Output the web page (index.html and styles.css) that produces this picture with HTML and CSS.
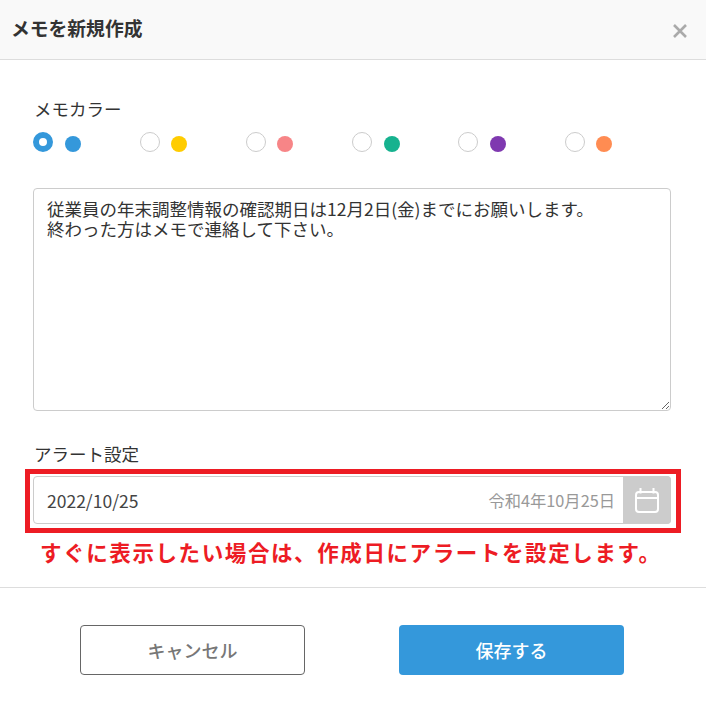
FILE: index.html
```html
<!DOCTYPE html>
<html lang="ja">
<head>
    <meta charset="UTF-8">
    <meta name="viewport" content="width=device-width, initial-scale=1.0">
    <title>メモを新規作成</title>
    <link rel="stylesheet" href="styles.css">
</head>
<body>
    <div class="modal">
        <div class="modal-header">
            <h1>メモを新規作成</h1>
            <svg class="close-icon" width="16" height="16" viewBox="0 0 16 16">
                <path d="M2 2L14 14M14 2L2 14" stroke="#aaa" stroke-width="2.6" fill="none"/>
            </svg>
        </div>

        <div class="modal-body">
            <div class="field-label">メモカラー</div>
            <div class="color-list">
                <div class="color-item"><span class="radio checked"></span><span class="swatch blue"></span></div>
                <div class="color-item"><span class="radio"></span><span class="swatch yellow"></span></div>
                <div class="color-item"><span class="radio"></span><span class="swatch pink"></span></div>
                <div class="color-item"><span class="radio"></span><span class="swatch green"></span></div>
                <div class="color-item"><span class="radio"></span><span class="swatch purple"></span></div>
                <div class="color-item"><span class="radio"></span><span class="swatch orange"></span></div>
            </div>

            <textarea class="memo-text">従業員の年末調整情報の確認期日は12月2日(金)までにお願いします。
終わった方はメモで連絡して下さい。</textarea>

            <div class="field-label alert-label">アラート設定</div>
            <div class="date-field">
                <span class="date-value">2022/10/25</span>
                <span class="date-era">令和4年10月25日</span>
                <span class="date-button">
                    <svg width="26" height="26" viewBox="0 0 26 26" fill="none" stroke="#fff" stroke-width="2">
                        <rect x="2" y="5" width="22" height="20" rx="3"/>
                        <path d="M2 11H24M6.5 1V6.5M19.5 1V6.5"/>
                    </svg>
                </span>
                <div class="highlight-box"></div>
            </div>
            <p class="note">すぐに表示したい場合は、作成日にアラートを設定します。</p>
        </div>

        <div class="modal-footer">
            <button class="btn btn-cancel">キャンセル</button>
            <button class="btn btn-save">保存する</button>
        </div>
    </div>
</body>
</html>
```

FILE: styles.css
```css
* {
    box-sizing: border-box;
}

body {
    margin: 0;
    background-color: white;
    color: #333;
    font-family: "Noto Sans CJK JP", "Noto Sans", sans-serif;
    font-size: 17.5px;
}

.modal {
    width: 706px;
    height: 708px;
}

.modal-header {
    display: flex;
    justify-content: space-between;
    align-items: center;
    height: 60px;
    padding: 0 18px 0 11px;
    background-color: #f9f9f9;
    border-bottom: 1px solid #ddd;
}

.modal-header h1 {
    margin: 0;
    font-size: 18.8px;
    font-weight: 700;
    line-height: 1;
    position: relative;
    top: -1px;
}

.close-icon {
    margin-top: 3px;
}

.modal-body {
    padding: 37px 35px 0 33px;
}

.field-label {
    padding-left: 1px;
    font-size: 17.5px;
    line-height: 24px;
}

.color-list {
    display: grid;
    grid-template-columns: repeat(6, 1fr);
    margin-top: 11px;
    margin-left: 0.4px;
}

.color-item {
    display: flex;
    gap: 11.5px;
    height: 21px;
}

.radio {
    width: 20px;
    height: 20px;
    border: 1px solid #ccc;
    border-radius: 50%;
    background-color: white;
}

.radio.checked {
    border: 6px solid #3498db;
}

.swatch {
    width: 16px;
    height: 16px;
    margin-top: 4px;
    border-radius: 50%;
}

.blue { background-color: #3498db; }
.yellow { background-color: #ffcc00; }
.pink { background-color: #f78587; }
.green { background-color: #16b28f; }
.purple { background-color: #7f39b0; }
.orange { background-color: #ff8c52; }

.memo-text {
    display: block;
    width: 100%;
    height: 223px;
    margin-top: 35px;
    padding: 10px 13px;
    border: 1px solid #ccc;
    border-radius: 4px;
    color: #333;
    font-family: inherit;
    font-size: 17.5px;
    line-height: 20px;
}

.alert-label {
    margin-top: 31px;
}

.date-field {
    position: relative;
    display: flex;
    align-items: center;
    height: 48px;
    margin-top: 10px;
    padding-left: 13px;
    border: 1px solid #ccc;
    border-radius: 4px;
}

.date-value {
    flex: 1;
    color: #444;
}

.date-era {
    margin-right: 8px;
    color: #999;
    font-size: 16.3px;
}

.date-button {
    display: flex;
    justify-content: center;
    align-items: center;
    align-self: stretch;
    width: 48px;
    margin: -1px -1px -1px 0;
    background-color: #ccc;
    border-radius: 0 4px 4px 0;
}

.highlight-box {
    position: absolute;
    top: -8px;
    left: -9px;
    width: 656px;
    height: 64px;
    border: 5px solid #ed1c24;
}

.note {
    margin: 15px 0 0 7px;
    color: #ed1c24;
    font-size: 21.5px;
    font-weight: 700;
    line-height: 26px;
    letter-spacing: 1.6px;
    white-space: nowrap;
}

.modal-footer {
    display: flex;
    justify-content: space-between;
    height: 121px;
    margin-top: 22px;
    padding: 37px 82px 0 80px;
    border-top: 1px solid #ddd;
}

.btn {
    width: 225px;
    height: 50px;
    border-radius: 4px;
    font-family: inherit;
    font-size: 18px;
    font-weight: 500;
    cursor: pointer;
}

.btn-cancel {
    background-color: white;
    border: 1px solid #666;
    color: #777;
}

.btn-save {
    background-color: #3498db;
    border: none;
    color: white;
}
```
